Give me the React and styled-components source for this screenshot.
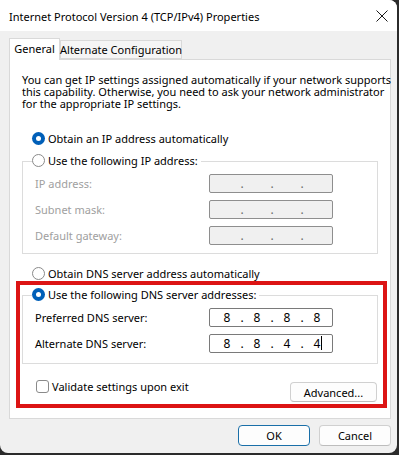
import React from "react";
import styled, { createGlobalStyle } from "styled-components";

const GlobalStyle = createGlobalStyle`
  html, body {
    margin: 0;
    padding: 0;
    background: #2b2b2b;
  }
  body {
    font-family: "Noto Sans", "Segoe UI", sans-serif;
    font-size: 11px;
    color: #000;
  }
`;

const Window = styled.div`
  position: relative;
  width: 397px;
  height: 453px;
  background: #f0f0f0;
  border-radius: 0 8px 8px 8px;
  overflow: hidden;
  display: flex;
  flex-direction: column;
`;

const TitleBar = styled.div`
  height: 31px;
  background: #fff;
  display: flex;
  align-items: center;
  justify-content: space-between;
  padding: 0 5px 0 9px;
  flex-shrink: 0;
`;

const Title = styled.span`
  font-size: 11px;
  white-space: nowrap;
  margin-top: 1px;
`;

const CloseBtn = styled.div`
  width: 20px;
  height: 20px;
  display: flex;
  align-items: center;
  justify-content: center;
`;

const Body = styled.div`
  flex: 1;
  display: flex;
  flex-direction: column;
  padding: 7px 6px 0 9px;
`;

const TabStrip = styled.div`
  display: flex;
  align-items: flex-end;
  height: 21px;
  position: relative;
  z-index: 1;
`;

const Tab = styled.div`
  box-sizing: border-box;
  width: ${(p) => p.$w}px;
  height: ${(p) => (p.$active ? "22px" : "19px")};
  margin-bottom: ${(p) => (p.$active ? "-1px" : "0")};
  background: ${(p) => (p.$active ? "#fff" : "#f5f5f5")};
  border: 1px solid #d9d9d9;
  border-bottom: ${(p) => (p.$active ? "none" : "1px solid #d9d9d9")};
  display: flex;
  align-items: center;
  justify-content: center;
  white-space: nowrap;
  padding-bottom: ${(p) => (p.$active ? "2px" : "0")};
`;

const Panel = styled.div`
  width: 382px;
  height: 360px;
  box-sizing: border-box;
  background: #fff;
  border: 1px solid #d9d9d9;
  padding: 14px 12px 0 12px;
  display: flex;
  flex-direction: column;
`;

const Intro = styled.p`
  margin: 0;
  line-height: 12px;
  white-space: nowrap;
`;

const RadioRow = styled.label`
  display: flex;
  align-items: center;
  gap: 3px;
  height: 15px;
  white-space: nowrap;
  margin-top: ${(p) => p.$mt || 0}px;
  margin-left: ${(p) => p.$ml || 0}px;
  background: ${(p) => (p.$legend ? "#fff" : "transparent")};
  padding-right: ${(p) => (p.$legend ? "3px" : "0")};
  align-self: flex-start;
  position: relative;
  z-index: 1;
`;

const RadioDot = styled.span`
  width: 13px;
  height: 13px;
  box-sizing: border-box;
  border-radius: 50%;
  flex-shrink: 0;
  display: flex;
  align-items: center;
  justify-content: center;
  background: ${(p) => (p.$checked ? "#005fb8" : "#fff")};
  border: ${(p) => (p.$checked ? "none" : "1px solid #8a8a8a")};
  &::after {
    content: "";
    display: ${(p) => (p.$checked ? "block" : "none")};
    width: 5px;
    height: 5px;
    border-radius: 50%;
    background: #fff;
  }
`;

const Group = styled.div`
  margin-top: ${(p) => p.$mt || 0}px;
  display: flex;
  flex-direction: column;
`;

const GroupBox = styled.div`
  margin-top: -7px;
  border: 1px solid #dcdcdc;
  height: ${(p) => p.$h}px;
  box-sizing: border-box;
  padding: 12px 44px 0 12px;
  display: flex;
  flex-direction: column;
  gap: 7px;
`;

const FieldRow = styled.div`
  display: flex;
  align-items: center;
  justify-content: space-between;
  height: 19px;
  color: ${(p) => (p.$disabled ? "#a0a0a0" : "#000")};
  white-space: nowrap;
`;

const IpBox = styled.div`
  width: 124px;
  height: 19px;
  box-sizing: border-box;
  border: 1px solid ${(p) => (p.$disabled ? "#8e8e8e" : "#7a7a7a")};
  border-radius: 2px;
  background: ${(p) => (p.$disabled ? "#f0f0f0" : "#fff")};
  display: flex;
  align-items: center;
  padding-left: 6px;
  font-size: 12px;
  color: ${(p) => (p.$disabled ? "#6d6d6d" : "#000")};
`;

const Octet = styled.span`
  width: 22px;
  text-align: center;
  position: relative;
`;

const Dot = styled.span`
  width: 8px;
  text-align: center;
`;

const Caret = styled.span`
  position: absolute;
  top: 1px;
  left: 15px;
  width: 1px;
  height: 14px;
  background: #000;
`;

const BottomRow = styled.div`
  display: flex;
  align-items: flex-start;
  justify-content: space-between;
  margin-top: 16px;
  padding-left: 14px;
  padding-right: 1px;
`;

const CheckRow = styled.label`
  display: flex;
  align-items: center;
  gap: 3px;
  height: 13px;
  white-space: nowrap;
`;

const CheckBox = styled.span`
  width: 13px;
  height: 13px;
  box-sizing: border-box;
  border: 1px solid #8a8a8a;
  border-radius: 3px;
  background: #fff;
`;

const Button = styled.button`
  font-family: inherit;
  font-size: 11px;
  color: #000;
  width: ${(p) => p.$w}px;
  height: ${(p) => p.$h || 21}px;
  margin-top: ${(p) => p.$mt || 0}px;
  box-sizing: border-box;
  background: #fdfdfd;
  border: 1px solid ${(p) => (p.$default ? "#1a6fa8" : "#d0d0d0")};
  border-bottom-color: ${(p) => (p.$default ? "#1a6fa8" : "#bdbdbd")};
  border-radius: 4px;
  padding: 0;
  display: flex;
  align-items: center;
  justify-content: center;
`;

const Footer = styled.div`
  display: flex;
  justify-content: flex-end;
  gap: 9px;
  margin-top: 6px;
`;

const Highlight = styled.div`
  position: absolute;
  left: 16px;
  top: 281px;
  width: 371px;
  height: 127px;
  box-sizing: border-box;
  border: 4px solid #dc1414;
  pointer-events: none;
`;

function Radio({ checked, children, ...rest }) {
  return (
    <RadioRow {...rest}>
      <RadioDot $checked={checked} />
      <span>{children}</span>
    </RadioRow>
  );
}

function IpField({ value, disabled, caret }) {
  const parts = value || ["", "", "", ""];
  return (
    <IpBox $disabled={disabled}>
      {parts.map((p, i) => (
        <React.Fragment key={i}>
          <Octet>
            {p}
            {caret && i === 3 && <Caret />}
          </Octet>
          {i < 3 && <Dot>.</Dot>}
        </React.Fragment>
      ))}
    </IpBox>
  );
}

export default function App() {
  return (
    <>
      <GlobalStyle />
      <Window>
        <TitleBar>
          <Title>Internet Protocol Version 4 (TCP/IPv4) Properties</Title>
          <CloseBtn>
            <svg width="12" height="12" viewBox="0 0 12 12">
              <path d="M0.5 0.5 L11.5 11.5 M11.5 0.5 L0.5 11.5" stroke="#1a1a1a" strokeWidth="1" />
            </svg>
          </CloseBtn>
        </TitleBar>
        <Body>
          <TabStrip>
            <Tab $active $w={51}>General</Tab>
            <Tab $w={122}>Alternate Configuration</Tab>
          </TabStrip>
          <Panel>
            <Intro>
              You can get IP settings assigned automatically if your network supports
              <br />
              this capability. Otherwise, you need to ask your network administrator
              <br />
              for the appropriate IP settings.
            </Intro>

            <Radio checked $mt={21} $ml={10}>
              Obtain an IP address automatically
            </Radio>

            <Group $mt={7}>
              <Radio $ml={10} $legend>
                Use the following IP address:
              </Radio>
              <GroupBox $h={93}>
                <FieldRow $disabled>
                  IP address:
                  <IpField disabled />
                </FieldRow>
                <FieldRow $disabled>
                  Subnet mask:
                  <IpField disabled />
                </FieldRow>
                <FieldRow $disabled>
                  Default gateway:
                  <IpField disabled />
                </FieldRow>
              </GroupBox>
            </Group>

            <Radio $mt={12} $ml={10}>
              Obtain DNS server address automatically
            </Radio>

            <Group $mt={6}>
              <Radio checked $ml={10} $legend>
                Use the following DNS server addresses:
              </Radio>
              <GroupBox $h={69}>
                <FieldRow>
                  Preferred DNS server:
                  <IpField value={["8", "8", "8", "8"]} />
                </FieldRow>
                <FieldRow>
                  Alternate DNS server:
                  <IpField value={["8", "8", "4", "4"]} caret />
                </FieldRow>
              </GroupBox>
            </Group>

            <BottomRow>
              <CheckRow>
                <CheckBox />
                <span>Validate settings upon exit</span>
              </CheckRow>
              <Button $w={87} $h={20} $mt={2}>
                Advanced...
              </Button>
            </BottomRow>
          </Panel>
          <Footer>
            <Button $w={72} $default>
              OK
            </Button>
            <Button $w={72}>Cancel</Button>
          </Footer>
        </Body>
        <Highlight />
      </Window>
    </>
  );
}
